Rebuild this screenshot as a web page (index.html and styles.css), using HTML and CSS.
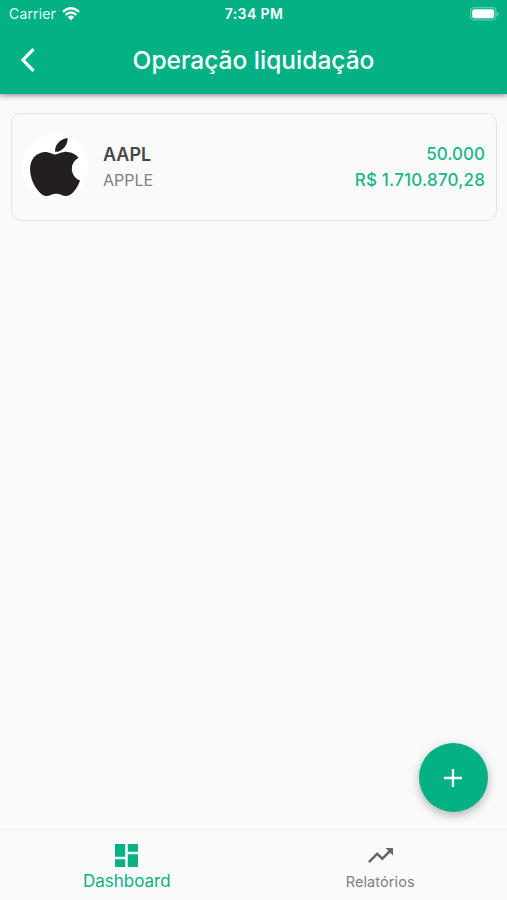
FILE: index.html
```html
<!DOCTYPE html>
<html lang="pt-BR">
<head>
<meta charset="utf-8">
<title>Operação liquidação</title>
<link rel="stylesheet" href="styles.css">
</head>
<body>
<div class="app">
  <header class="header">
    <div class="status">
      <div class="carrier"><span>Carrier</span>
        <svg class="wifi" viewBox="0 0 18 14"><path d="M1 4.8Q9-2.2 17 4.8M3.7 7.8Q9 3.2 14.3 7.8" fill="none" stroke="#fff" stroke-width="2.3"/><path d="M5.7 10Q9 7.2 12.3 10L9 13.3Z" fill="#fff"/></svg>
      </div>
      <span class="time">7:34 PM</span>
      <svg class="battery" viewBox="0 0 30 14"><rect x="1.6" y=".6" width="25.2" height="12.3" rx="3.5" fill="none" stroke="#fff" stroke-opacity=".35" stroke-width="1.2"/><rect x="3.2" y="2.2" width="22" height="9.1" rx="2" fill="#fff"/><path d="M27.8 4.7Q29.4 5.5 29.4 6.8T27.8 8.9Z" fill="#fff" fill-opacity=".5"/></svg>
    </div>
    <div class="titlebar">
      <svg class="back" viewBox="0 0 16 26"><path d="M13.5 2.2L3 13L13.5 23.8" fill="none" stroke="#fff" stroke-width="3.2"/></svg>
      <h1>Operação liquidação</h1>
    </div>
  </header>
  <main class="content">
    <article class="card">
      <div class="avatar"><svg viewBox="4 32 376 448" preserveAspectRatio="none"><path fill="#231f20" d="M318.7 268.7c-.2-36.7 16.4-64.4 50-84.8-18.8-26.9-47.2-41.7-84.7-44.6-35.5-2.8-74.3 20.7-88.5 20.7-15 0-49.4-19.7-76.4-19.7C63.3 141.2 4 184.8 4 273.5q0 39.3 14.4 81.2c12.8 36.7 59 126.7 107.2 125.2 25.2-.6 43-17.9 75.8-17.9 31.8 0 48.3 17.9 76.4 17.9 48.6-.7 90.4-82.5 102.6-119.3-65.2-30.7-61.7-90-61.7-91.9zm-56.6-164.2c27.3-32.4 24.8-61.9 24-72.5-24.1 1.4-52 16.4-67.9 34.9-17.5 19.8-27.8 44.3-25.6 71.9 26.1 2 49.9-11.4 69.5-34.3z"/></svg></div>
      <div class="name"><strong>AAPL</strong><span>APPLE</span></div>
      <div class="values"><span class="quantity">50.000</span><span class="amount">R$ 1.710.870,28</span></div>
    </article>
  </main>
  <nav class="tabs">
    <div class="tab active">
      <svg viewBox="3 3 18 18"><path fill="currentColor" d="M3 13h8V3H3v10zm0 8h8v-6H3v6zm10 0h8V11h-8v10zm0-18v6h8V3h-8z"/></svg>
      <span>Dashboard</span>
    </div>
    <div class="tab">
      <svg class="trend" viewBox="2 6 20 12"><path fill="currentColor" d="M16 6l2.29 2.29-4.88 4.88-4-4L2 16.59 3.41 18l6-6 4 4 6.3-6.29L22 12V6z"/></svg>
      <span>Relatórios</span>
    </div>
  </nav>
  <div class="fab"><svg viewBox="0 0 18 18"><path d="M9 0V18M0 9H18" stroke="#fff" stroke-width="2.3"/></svg></div>
</div>
</body>
</html>
```
FILE: styles.css
```css
* { box-sizing: border-box; }
body { margin: 0; font-family: Inter, "Liberation Sans", sans-serif; background: #fafafa; }
svg { display: block; flex: none; }
span, strong, h1 { white-space: nowrap; }
.app { position: relative; height: 900px; display: flex; flex-direction: column; overflow: hidden; }
.header { height: 94px; background: #03b184; color: #fff; box-shadow: 0 2px 5px rgba(0,0,0,.38); }
.status { height: 27px; padding: 0 8px 0 9px; display: grid; grid-template-columns: 1fr auto 1fr; align-items: center; font-size: 14px; }
.carrier { display: flex; align-items: center; gap: 6px; color: #e0fff6; letter-spacing: .15px; }
.wifi { width: 18px; height: 14px; }
.time { font-weight: 600; font-size: 14px; letter-spacing: .4px; }
.battery { width: 30px; height: 14px; justify-self: end; }
.titlebar { height: 65px; display: grid; grid-template-columns: 60px 1fr 60px; align-items: center; }
.back { width: 16px; height: 26px; margin-left: 20px; }
h1 { margin: 0; text-align: center; font-size: 24.5px; font-weight: 500; }
.content { flex: 1; padding: 19px 10px 0 11px; }
.card { height: 108px; border: 1.5px solid #e5e5e5; border-radius: 10px; display: flex; align-items: center; padding: 0 11px 0 10px; }
.avatar { width: 66px; height: 66px; border-radius: 50%; background: #fff; display: flex; align-items: center; justify-content: center; }
.avatar svg { width: 50px; height: 58px; margin-right: 1px; }
.name, .values { display: flex; flex-direction: column; line-height: 25px; }
.name { margin-left: 15px; color: #808080; font-size: 16px; }
.name span { line-height: 26px; }
.name strong { color: #484848; font-size: 18px; font-weight: 600; }
.values { margin-left: auto; text-align: right; color: #20b58b; font-size: 17px; font-weight: 500; }
.amount { line-height: 26px; letter-spacing: .2px; margin-right: -.2px; }
.tabs { height: 71px; display: grid; grid-template-columns: 1fr 1fr; border-top: 1px solid #f5f5f5; }
.tab { display: flex; flex-direction: column; align-items: center; padding-top: 14px; color: #808080; font-size: 14.5px; letter-spacing: .1px; }
.tab svg { width: 23px; height: 23px; }
.tab span { line-height: 22px; margin-top: 3px; }
.tab .trend { width: 25px; height: 15px; margin: 4px 0; color: #666; }
.tab .trend + span { margin-top: 4px; }
.active { color: #08b184; font-size: 17px; letter-spacing: 0; }
.fab { position: absolute; left: 419px; top: 743px; width: 69px; height: 69px; border-radius: 50%; background: #03b184; display: flex; align-items: center; justify-content: center; box-shadow: 0 4px 8px rgba(0,0,0,.22), 0 1px 14px rgba(0,0,0,.08); }
.fab svg { width: 18px; height: 18px; margin-right: 1px; }
```
